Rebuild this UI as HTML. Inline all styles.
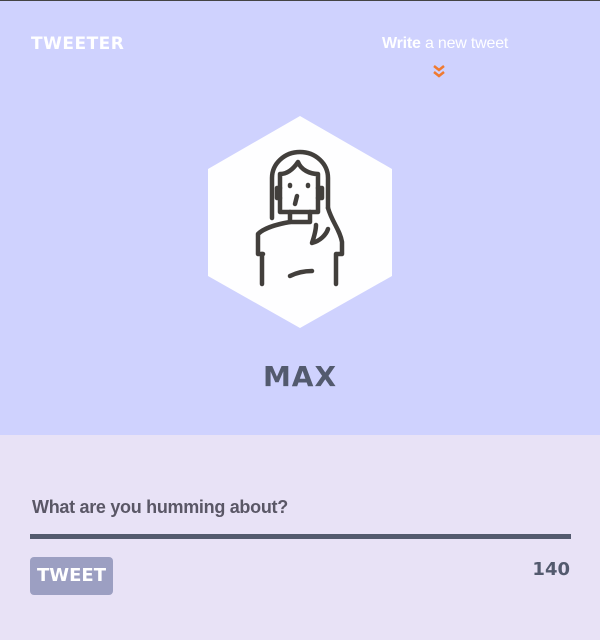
<!DOCTYPE html>
<html><head><style>
*{margin:0;padding:0;box-sizing:border-box}
body{width:600px;height:640px;overflow:hidden;font-family:"Liberation Sans",sans-serif;background:#e8e2f6;position:relative}
.top{position:absolute;left:0;top:0;width:600px;height:435px;background:#cfd2fe;border-top:1px solid #444}
.logo{position:absolute;left:31px;top:34px;color:#fff;font-weight:900;font-size:17px;letter-spacing:0.5px;font-family:"DejaVu Sans",sans-serif}
.write{position:absolute;left:382px;top:35px;color:#fff;font-size:16px;font-weight:300;letter-spacing:-0.2px}
.write b{font-weight:700}
.name{position:absolute;left:0;width:600px;top:360px;text-align:center;color:#535a6e;font-weight:900;font-size:28px;font-family:"DejaVu Sans",sans-serif;letter-spacing:1px}
.q{position:absolute;left:32px;top:497px;color:#5a5766;font-size:18px;font-weight:700;letter-spacing:-0.3px}
.line{position:absolute;left:30px;top:534px;width:541px;height:5px;background:#535a6e}
.btn{position:absolute;left:30px;top:557px;width:83px;height:38px;background:#9c9fc2;border-radius:4px;color:#fff;font-weight:900;font-size:18px;text-align:center;line-height:38px;font-family:"DejaVu Sans",sans-serif}
.cnt{position:absolute;right:30px;top:559px;color:#535a6e;font-weight:900;font-size:18px;font-family:"DejaVu Sans",sans-serif}
</style></head><body>
<div class="top"></div>
<div class="logo">TWEETER</div>
<div class="write"><b>Write</b> a new tweet</div>
<svg style="position:absolute;left:431px;top:63px" width="16" height="18" viewBox="0 0 16 18"><path d="M3 3l5 4 5-4M3 9l5 4 5-4" stroke="#f07a30" stroke-width="2.5" fill="none"/></svg>
<svg style="position:absolute;left:0;top:0" width="600" height="435">
<polygon points="300,116 392,169 392,276 300,328 208,276 208,169" fill="#fefeff"/>
<g stroke="#423f3c" stroke-width="4.5" fill="none" stroke-linecap="round" stroke-linejoin="round">
<path d="M272 218v-40a28 26 0 0 1 56 0v30"/>
<path d="M280 212v-38c8 0 14-6 18-12 3 8 12 12 20 12v38z"/>
<path d="M280 188h-3v10h3M318 188h4v10h-4"/>
<path d="M290 212v10h20v-10"/>
<path d="M290 222c-12 2-26 6-32 12v20h5"/>
<path d="M328 208c4 14 12 22 14 34v12h-5"/>
<path d="M316 225c0 5-2 12-4 18 8-2 14-8 16-14"/>
<path d="M262 254v30M336 254v30"/>
<path d="M290 276c8-4 16-5 22-5"/>
<path d="M290 185v1M308 185v1M297 196l-2 8"/>
</g></svg>
<div class="name">MAX</div>
<div class="q">What are you humming about?</div>
<div class="line"></div>
<div class="btn">TWEET</div>
<div class="cnt">140</div>
</body></html>
